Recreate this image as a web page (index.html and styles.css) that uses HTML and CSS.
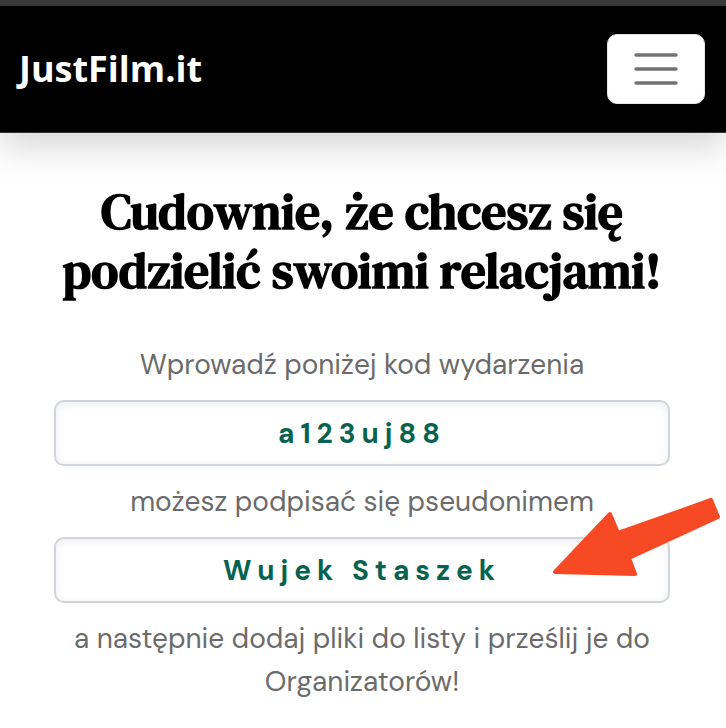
FILE: index.html
```html
<!DOCTYPE html>
<html lang="pl">
<head>
  <meta charset="utf-8">
  <meta name="viewport" content="width=device-width, initial-scale=1">
  <title>JustFilm.it</title>
  <link rel="stylesheet" href="styles.css">
</head>
<body>
  <header class="navbar">
    <a class="brand" href="#">JustFilm.it</a>
    <button class="toggler" type="button" aria-label="Menu">
      <svg class="toggler-icon" viewBox="0 0 60 60" aria-hidden="true">
        <path d="M10 16H50M10 30H50M10 44H50" fill="none" stroke="#737373" stroke-width="3.4" stroke-linecap="round"/>
      </svg>
    </button>
  </header>
  <main class="content">
    <h1 class="title">Cudownie, że chcesz się podzielić swoimi relacjami!</h1>
    <form class="form">
      <label class="text" for="code">Wprowadź poniżej kod wydarzenia</label>
      <input class="field" id="code" type="text" value="a123uj88">
      <label class="text" for="nick">możesz podpisać się pseudonimem</label>
      <div class="marked">
        <input class="field" id="nick" type="text" value="Wujek Staszek">
        <svg class="arrow" viewBox="0 0 170 84" aria-hidden="true">
          <path d="M3 75L58 17L66 36L159 3L166 20L77 61L83 77Z" fill="#f64924" stroke="#f64924" stroke-width="4" stroke-linejoin="round"/>
        </svg>
      </div>
      <p class="text">a następnie dodaj pliki do listy i prześlij je do Organizatorów!</p>
    </form>
  </main>
</body>
</html>
```
FILE: styles.css
```css
* {
  box-sizing: border-box;
}

body {
  margin: 0;
  background: #fff;
  color: #6b6b6b;
  font-family: "DM Sans", "Open Sans", sans-serif;
}

.navbar {
  display: flex;
  align-items: center;
  justify-content: space-between;
  padding: 28px 21px 28px 19px;
  background: #000;
  border-top: 6px solid #3a3a3a;
  border-bottom: 1px solid #333;
  box-shadow: 0 16px 32px rgba(0, 0, 0, 0.15);
}

.brand {
  color: #fff;
  font: 700 36px/48px "Open Sans", sans-serif;
  text-decoration: none;
}

.toggler {
  display: flex;
  align-items: center;
  justify-content: center;
  width: 98px;
  height: 70px;
  padding: 0;
  background: #fff;
  border: 1px solid #e6e6e6;
  border-radius: 10px;
}

.toggler-icon {
  width: 60px;
  height: 60px;
}

.content {
  padding: 49px 56px 24px 54px;
  text-align: center;
}

.title {
  margin: 0 0 43px;
  color: #000;
  font: 700 50px/59px "DM Serif Text", "DM Serif Display", "Liberation Serif", serif;
}

.form {
  display: flex;
  flex-direction: column;
  gap: 14px;
}

.text {
  margin: 0;
  font-size: 28px;
  line-height: 43px;
}

.field {
  display: block;
  width: 100%;
  height: 66px;
  padding: 0 24px;
  background: #fff;
  border: 2px solid #d0d5dc;
  border-radius: 10px;
  box-shadow: inset 0 2px 8px rgba(0, 0, 0, 0.08);
  color: #05634f;
  font: 700 28px/42px "DM Sans", "Open Sans", sans-serif;
  letter-spacing: 6px;
  text-align: center;
}

.marked {
  position: relative;
}

.arrow {
  position: absolute;
  right: -52px;
  bottom: 22px;
  width: 170px;
  height: 84px;
}
```
